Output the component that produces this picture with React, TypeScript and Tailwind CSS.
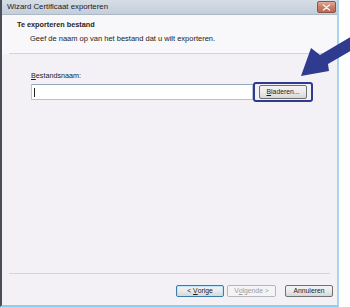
const font = "font-['Liberation_Sans',Arial,sans-serif]";

function CloseButton() {
  return (
    <div className="mr-[1px] flex h-[12px] w-[19px] items-center justify-center rounded-[2px] border border-[#8a5446] bg-gradient-to-b from-[#e2ab9a] via-[#c97c66] to-[#bb6a53]">
      <svg width="9" height="7" viewBox="0 0 9 7">
        <path d="M1.5 1 L7.5 6 M7.5 1 L1.5 6" stroke="#f4f0ee" strokeWidth="1.5" strokeLinecap="round" />
      </svg>
    </div>
  );
}

function TitleBar() {
  return (
    <div className="flex h-[15px] items-center justify-between border-b border-[#aeb9c6] bg-gradient-to-b from-[#d6dde6] to-[#c4ceda] pl-[5px]">
      <span className="text-[7.8px] leading-none text-[#1b1b1b]">Wizard Certificaat exporteren</span>
      <CloseButton />
    </div>
  );
}

function WizardButton({
  children,
  width,
  variant = "normal",
}: {
  children: React.ReactNode;
  width: string;
  variant?: "normal" | "default" | "disabled";
}) {
  const border =
    variant === "default"
      ? "border-[#3d7bad] shadow-[inset_0_0_0_1px_#bfe4f7]"
      : variant === "disabled"
        ? "border-[#b5b8bb]"
        : "border-[#707070]";
  const bg =
    variant === "disabled"
      ? "bg-[#f4f4f4] text-[#9c9c9c]"
      : "bg-gradient-to-b from-[#f3f3f3] via-[#ebebeb] to-[#d6d6d6] text-[#1b1b1b]";
  return (
    <div
      className={`flex h-[12px] items-center justify-center rounded-[2px] border text-[6.8px] leading-none ${width} ${border} ${bg}`}
    >
      {children}
    </div>
  );
}

function Arrow() {
  return (
    <svg
      className="pointer-events-none absolute left-0 top-0"
      width="350"
      height="307"
      viewBox="0 0 350 307"
    >
      <polygon
        points="301,76 311,48 320,55 352,36 352,50 328,64 329,71"
        fill="#2e3b8e"
      />
    </svg>
  );
}

export default function App() {
  return (
    <div className={`relative flex h-[307px] w-[350px] overflow-hidden bg-white ${font}`}>
      <div className="flex h-[307px] w-[339px] flex-col border-b-2 border-l-2 border-r-2 border-b-[#8ccfec] border-l-[#4a4e57] border-r-[#a5d6ee]">
        <TitleBar />

        <div className="flex h-[39px] flex-col bg-[#f8f7fa]">
          <div className="pl-[15px] pt-[6px] text-[7.3px] font-bold leading-[8px] text-[#2a1b1b]">
            Te exporteren bestand
          </div>
          <div className="pl-[28px] pt-[5px] text-[7.5px] leading-[9px] text-[#1b1b1b]">
            Geef de naam op van het bestand dat u wilt exporteren.
          </div>
          <div className="mx-[7px] mt-auto h-[1px] bg-[#d5d3d9]" />
        </div>

        <div className="flex flex-1 flex-col bg-[#f3f1f5] pl-[29px] pt-[17px]">
          <div className="text-[7.2px] leading-[9px] text-[#1b1b1b]">
            <span className="underline">B</span>estandsnaam:
          </div>
          <div className="mt-[2px] flex items-center">
            <div className="flex h-[16px] w-[222px] items-center rounded-[1px] border border-[#b7c3d3] border-t-[#9aa7b8] bg-white pl-[2px]">
              <div className="h-[9px] w-[1px] bg-[#222]" />
            </div>
            <div className="rounded-[3px] border-2 border-[#2e3b8e] px-[4px] py-[1px]">
              <div className="flex h-[14px] w-[48px] items-center justify-center rounded-[2px] border border-[#707070] bg-gradient-to-b from-[#f3f3f3] via-[#ebebeb] to-[#d6d6d6] text-[6.8px] leading-none text-[#1b1b1b]">
                <span className="underline">B</span>laderen...
              </div>
            </div>
          </div>

          <div className="mt-auto" />
        </div>

        <div className="flex flex-col bg-[#f3f1f5]">
          <div className="mx-[7px] h-[1px] bg-[#d5d3d9]" />
          <div className="flex justify-end pb-[8px] pr-[4px] pt-[11px]">
            <WizardButton width="w-[48px]" variant="default">
              &lt;&nbsp;<span className="underline">V</span>orige
            </WizardButton>
            <div className="w-[3px]" />
            <WizardButton width="w-[49px]" variant="disabled">
              V<span className="underline">o</span>lgende &gt;
            </WizardButton>
            <div className="w-[9px]" />
            <WizardButton width="w-[48px]">Annuleren</WizardButton>
          </div>
        </div>
      </div>
      <Arrow />
    </div>
  );
}
